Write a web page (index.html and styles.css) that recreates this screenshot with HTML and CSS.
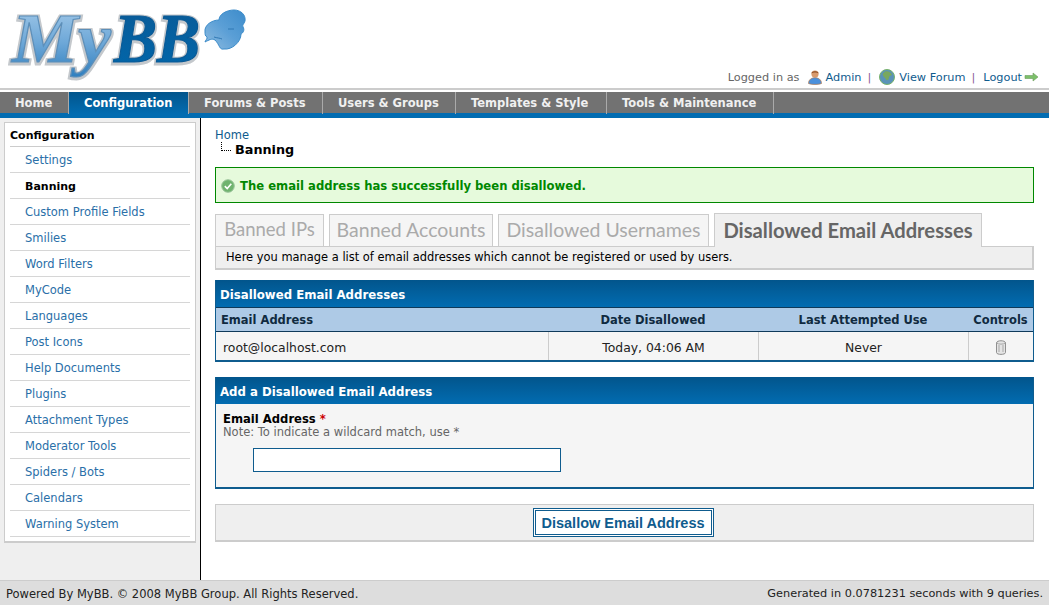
FILE: index.html
```html
<!DOCTYPE html>
<html lang="en">
<head>
<meta charset="utf-8">
<title>Banning</title>
<link rel="stylesheet" href="styles.css">
</head>
<body>
<div class="page">
  <header class="header">
    <svg class="logo" width="250" height="88" viewBox="0 0 250 88" aria-label="MyBB logo">
      <defs>
        <linearGradient id="lgM" x1="0" y1="0" x2="0" y2="1"><stop offset="0" stop-color="#a9cdea"/><stop offset=".55" stop-color="#6ea8d8"/><stop offset="1" stop-color="#2f7fbf"/></linearGradient>
        <linearGradient id="lgB" x1="0" y1="0" x2="0" y2="1"><stop offset="0" stop-color="#0a5a96"/><stop offset="1" stop-color="#0067ac"/></linearGradient>
        <linearGradient id="lgC" x1="0" y1="1" x2="1" y2="0"><stop offset="0" stop-color="#8fbce0"/><stop offset=".5" stop-color="#5b9fd6"/><stop offset="1" stop-color="#3d8ccb"/></linearGradient>
      </defs>
      <text class="logo-shadow" x="12" y="63" textLength="99" lengthAdjust="spacingAndGlyphs">My</text>
      <text class="logo-shadow" x="114" y="63" textLength="86" lengthAdjust="spacingAndGlyphs">BB</text>
      <text class="logo-my" x="12" y="62" textLength="99" lengthAdjust="spacingAndGlyphs" fill="url(#lgM)">My</text>
      <text class="logo-bb" x="114" y="62" textLength="86" lengthAdjust="spacingAndGlyphs" fill="url(#lgB)">BB</text>
      <path d="M205 32C204 25 212 20 219 20 219 14 227 10 234 10 241 10 246 15 245 21 244 24 242 25 243 27 245 30 243 33 241 34 241 42 232 50 224 49 219 50 220 45 215 40 212 38 209 40 205 42 205 41 208 38 207 37 205 36 205 34 205 32Z" fill="url(#lgC)" stroke="#3b8bc9"/>
      <path d="M228 29h6M214 37c3 1 6 1 8 2" fill="none" stroke="#2f78b4"/>
    </svg>
    <div class="user">
      <span class="logged">Logged in as</span>
      <svg class="ico" width="16" height="16" viewBox="0 0 16 16"><circle cx="8" cy="5" r="3.6" fill="#d99a6c"/><path d="M4.4 4.6C4.600 1.4 11.4 1.4 11.600 4.6 10 3.2 6 3.2 4.4 4.6z" fill="#8a4a1f"/><path d="M1.5 14.5c0-3.8 3-5.8 6.5-5.8s6.5 2 6.5 5.8c-3 1.300-10 1.300-13 0z" fill="#4a90dc" stroke="#b37a4e" stroke-width=".7"/></svg>
      <a class="link" href="#">Admin</a><span class="pipe">|</span>
      <svg class="ico globe" width="16" height="16" viewBox="0 0 16 16"><circle cx="8" cy="8" r="7.500" fill="#5a93b8" stroke="#78b26a"/><path d="M6 2.500c3-1 6 .5 7 3-1 2-3 1-3 3s-2 4-3 2-2-2-3-4 1-3 2-4z" fill="#79a85e"/></svg>
      <a class="link" href="#">View Forum</a><span class="pipe">|</span>
      <a class="link logout" href="#">Logout</a>
      <svg class="arrow" width="15" height="10" viewBox="0 0 15 10"><path d="M1 3.500h8V1l5 4-5 4V6.500H1z" fill="#7cc06a" stroke="#6c9c5c" stroke-width=".6"/></svg>
    </div>
  </header>
  <nav class="nav">
    <a class="tab" href="#">Home</a>
    <a class="tab active" href="#">Configuration</a>
    <a class="tab" href="#">Forums &amp; Posts</a>
    <a class="tab" href="#">Users &amp; Groups</a>
    <a class="tab" href="#">Templates &amp; Style</a>
    <a class="tab" href="#">Tools &amp; Maintenance</a>
  </nav>
  <div class="body">
    <aside class="side">
      <div class="side-box">
        <div class="side-title">Configuration</div>
        <ul class="side-list">
          <li><a href="#">Settings</a></li>
          <li><a class="current" href="#">Banning</a></li>
          <li><a href="#">Custom Profile Fields</a></li>
          <li><a href="#">Smilies</a></li>
          <li><a href="#">Word Filters</a></li>
          <li><a href="#">MyCode</a></li>
          <li><a href="#">Languages</a></li>
          <li><a href="#">Post Icons</a></li>
          <li><a href="#">Help Documents</a></li>
          <li><a href="#">Plugins</a></li>
          <li><a href="#">Attachment Types</a></li>
          <li><a href="#">Moderator Tools</a></li>
          <li><a href="#">Spiders / Bots</a></li>
          <li><a href="#">Calendars</a></li>
          <li><a href="#">Warning System</a></li>
        </ul>
      </div>
    </aside>
    <main class="main">
      <div class="crumb"><a class="link" href="#">Home</a></div>
      <div class="crumb-cur"><span class="tree"></span><b>Banning</b></div>
      <div class="success">
        <svg width="14" height="14" viewBox="0 0 14 14"><circle cx="7" cy="7" r="6.300" fill="#6fb36f" stroke="#9cc59c"/><path d="M3.800 7.200 6.200 9.500 10.300 4.800" fill="none" stroke="#fff" stroke-width="1.600"/></svg>
        <span>The email address has successfully been disallowed.</span>
      </div>
      <div class="tabs">
        <span class="ptab ptab-short">Banned IPs</span>
        <span class="ptab">Banned Accounts</span>
        <span class="ptab">Disallowed Usernames</span>
        <span class="ptab on">Disallowed Email Addresses</span>
      </div>
      <div class="tabdesc">Here you manage a list of email addresses which cannot be registered or used by users.</div>
      <section class="panel">
        <h2 class="panel-title">Disallowed Email Addresses</h2>
        <div class="grid-row grid-head">
          <span class="c1">Email Address</span><span>Date Disallowed</span><span>Last Attempted Use</span><span>Controls</span>
        </div>
        <div class="grid-row grid-cell">
          <span class="c1">root@localhost.com</span><span>Today, 04:06 AM</span><span>Never</span>
          <span><svg width="12" height="15" viewBox="0 0 12 15"><path d="M1.500 3c0-3 9-3 9 0v9.500c0 2.500-9 2.500-9 0z" fill="#e4e4e4" stroke="#8f8f8f"/><path d="M1.500 3c2 1.500 7 1.500 9 0M4 5v7M8 5v7" fill="none" stroke="#a8a8a8"/></svg></span>
        </div>
      </section>
      <section class="panel form">
        <h2 class="panel-title">Add a Disallowed Email Address</h2>
        <div class="form-body">
          <label class="flabel" for="email">Email Address <em>*</em></label>
          <div class="fnote">Note: To indicate a wildcard match, use *</div>
          <input class="finput" id="email" type="text">
        </div>
      </section>
      <div class="buttons"><button class="submit" type="button">Disallow Email Address</button></div>
    </main>
  </div>
  <footer class="footer">
    <span class="foot-left">Powered By MyBB. © 2008 MyBB Group. All Rights Reserved.</span>
    <span class="foot-right">Generated in 0.0781231 seconds with 9 queries.</span>
  </footer>
</div>
</body>
</html>
```
FILE: styles.css
```css
* { box-sizing: border-box; }
html, body { margin: 0; padding: 0; background: #fff; }
body { font: 11.5px "DejaVu Sans", Verdana, sans-serif; color: #000; }
a { text-decoration: none; }
.link { color: #0f5c8e; }
.page { display: flex; flex-direction: column; height: 605px; overflow: hidden; }

.header { height: 90px; flex: none; display: flex; justify-content: space-between; align-items: flex-end; border-bottom: 2px solid #ccc; padding: 0 10px 3px 0; font-size: 11.3px; }
.logo { align-self: flex-start; }
.logo text { font: italic bold 70px "Liberation Serif", serif; }
.logo-shadow { fill: none; stroke: #c4c8cc; stroke-width: 5px; }
.logo-my { stroke: #5d8fb9; stroke-width: 1.2px; }
.logo-bb { stroke: #0a5a96; stroke-width: 1.2px; }
.user { display: flex; align-items: center; color: #666; height: 16px; }
.user .ico { margin: 0 2px 0 8px; }
.user .globe { margin-left: 8px; margin-right: 4px; }
.pipe { color: #8b5a96; margin-left: 6px; }
.logout { margin-left: 8px; }
.arrow { margin-left: 2px; }

.nav { flex: none; margin-top: 2px; height: 26px; background: #727272; border-bottom: 5px solid #026cb1; display: grid; grid-template-columns: 69px 120px 134px 133px 151px 167px; }
.tab { color: #f0f0f0; font-weight: bold; font-size: 11.5px; line-height: 22px; padding-left: 15px; white-space: nowrap; border-right: 1px solid #aaa; }
.tab.active { color: #fff; background: linear-gradient(#02558c, #026cb1); }

.body { flex: 1; display: flex; min-height: 0; }
.side { width: 201px; flex: none; background: #efefef; border-right: 1px solid #000; padding: 4px 4px 0; }
.side-box { background: #fff; border: 1px solid #ccc; border-bottom-width: 2px; padding: 0 5px 4px; width: 192px; }
.side-title { font-weight: bold; font-size: 11px; color: #000; line-height: 25px; height: 24px; border-bottom: 1px solid #ccc; }
.side-list { list-style: none; margin: 0; padding: 0; }
.side-list li { height: 26px; line-height: 27px; border-bottom: 1px solid #d6d6d6; padding-left: 15px; }
.side-list a { color: #2a6fa8; }
.side-list a.current { color: #000; font-weight: bold; font-size: 11px; }

.main { flex: 1; min-width: 0; padding: 10px 15px 0 14px; }
.crumb { line-height: 14px; }
.crumb-cur { display: flex; align-items: flex-start; height: 16px; font-size: 12.8px; line-height: 16px; margin-left: 6px; }
.tree { width: 10px; height: 9px; border-left: 1px dotted #000; border-bottom: 1px dotted #000; margin-right: 4px; }
.success { margin-top: 9px; height: 36px; background: #e6fadc; border: 1px solid #080; color: #080; font-weight: bold; font-size: 11.65px; display: flex; align-items: center; gap: 5px; padding: 1px 5px 0; }
.tabs { display: grid; grid-template-columns: 109px 164px 211px 268px; column-gap: 5px; margin-top: 10px; height: 33px; align-items: end; }
.ptab { font: 19.5px Lato, sans-serif; color: #aaa; background: #f5f5f5; border: 1px solid #ccc; border-bottom: 0; height: 32px; line-height: 29px; text-align: center; white-space: nowrap; }
.ptab-short { font-size: 18.5px; }
.ptab.on { font-size: 20.2px; color: #666; background: #efefef; font-weight: bold; height: 34px; margin-bottom: -1px; position: relative; z-index: 1; line-height: 33px; }
.tabdesc { background: #efefef; border: 1px solid #ccc; border-width: 1px 2px 2px 1px; height: 24px; line-height: 21px; padding-left: 10px; margin-bottom: 10px; font-size: 11.45px; }

.panel { border: 1px solid #0f5c8e; border-width: 0 1px 2px; background: #f5f5f5; margin-bottom: 15px; }
.panel-title { margin: 0; font-size: 11.75px; font-weight: bold; color: #fff; line-height: 30px; height: 27px; padding-left: 4px; background: linear-gradient(#02558c, #026cb1); }
.grid-row { display: grid; grid-template-columns: 332px 210px 210px 1fr; align-items: center; text-align: center; }
.grid-head { background: #aecae6; height: 25px; border-top: 1px solid #0f3a5a; border-bottom: 1px solid #0f3a5a; font-weight: bold; color: #102a40; }
.grid-cell { height: 28px; font-size: 12.4px; color: #222; }
.grid-cell span { height: 100%; display: flex; align-items: center; justify-content: center; border-left: 1px solid #ccc; padding-top: 2px; }
.grid-cell span.c1 { border-left: 0; justify-content: flex-start; padding-left: 7px; }
.grid-head .c1 { text-align: left; padding-left: 5px; }

.form-body { height: 83px; padding: 8px 7px 0; }
.flabel { display: block; font-weight: bold; font-size: 11.6px; line-height: 14px; }
.flabel em { color: #c00; font-style: normal; }
.fnote { color: #666; line-height: 13px; }
.finput { display: block; width: 308px; height: 24px; margin: 9px 0 0 30px; border: 1px solid #0f5c8e; background: #fff; }

.buttons { height: 38px; background: #efefef; border: 1px solid #ccc; border-width: 1px 1px 2px; display: flex; justify-content: center; align-items: center; }
.submit { height: 29px; width: 181px; margin-right: 3px; padding: 0; background: #fff; color: #0f5c8e; border: 3px double #0f5c8e; font: bold 14.5px "Liberation Sans", Arial, sans-serif; }

.footer { flex: none; height: 25px; background: #ddd; border-top: 1px solid #ccc; display: flex; justify-content: space-between; align-items: center; padding: 1px 6px 0; color: #222; }
.foot-right { font-size: 11.3px; }
```
